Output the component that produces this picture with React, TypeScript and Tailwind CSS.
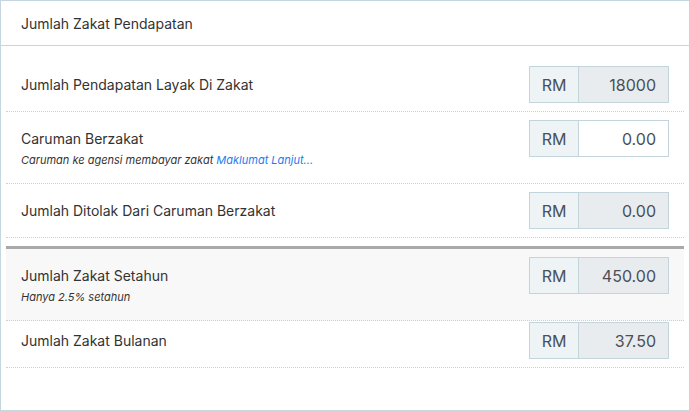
import type { ReactNode } from "react";

const font = { fontFamily: "Inter, 'Noto Sans', sans-serif" };

export default function App() {
  return (
    <div style={font} className="flex h-[411px] w-[690px] flex-col border border-[#c6d6de] bg-white text-[#333]">
      <div className="flex h-[45px] shrink-0 items-center border-b border-[#c6d6de] pl-5 text-[14px]">
        Jumlah Zakat Pendapatan
      </div>

      <div className="px-[5px] pt-3">
        <Row label="Jumlah Pendapatan Layak Di Zakat" value="18000" />
        <Row
          label="Caruman Berzakat"
          value="0.00"
          editable
          note={
            <>
              Caruman ke agensi membayar zakat{" "}
              <a href="#" className="text-[#1a7cf0]">Maklumat Lanjut...</a>
            </>
          }
        />
        <Row label="Jumlah Ditolak Dari Caruman Berzakat" value="0.00" />

        <div className="mt-2 border-t-[3px] border-[#a9a9a9]">
          <Row label="Jumlah Zakat Setahun" value="450.00" note="Hanya 2.5% setahun" shaded />
          <Row label="Jumlah Zakat Bulanan" value="37.50" tight />
        </div>
      </div>
    </div>
  );
}

function Row({
  label,
  value,
  note,
  editable,
  shaded,
  tight,
}: {
  label: string;
  value: string;
  note?: ReactNode;
  editable?: boolean;
  shaded?: boolean;
  tight?: boolean;
}) {
  return (
    <div
      className={`flex items-start justify-between border-b border-dotted border-[#cfcfcf] pb-2 pl-[15px] pr-[15px] ${
        tight ? "pt-[1px]" : "pt-2"
      } ${shaded ? "bg-[#f8f8f8]" : ""}`}
    >
      <div>
        <div className="flex h-[37px] items-center text-[14px]">{label}</div>
        {note && <div className="-mt-1 pb-2 text-[11px] italic leading-[14px] text-[#333]">{note}</div>}
      </div>
      <div className="flex h-[37px] w-[140px] border border-[#c3d4dc] text-[16px] text-[#495057]">
        <div className="flex w-[49px] items-center justify-center border-r border-[#c3d4dc] bg-[#eef3f6]">RM</div>
        <div className={`flex flex-1 items-center justify-end pr-3 ${editable ? "bg-white" : "bg-[#e9ecef]"}`}>{value}</div>
      </div>
    </div>
  );
}
